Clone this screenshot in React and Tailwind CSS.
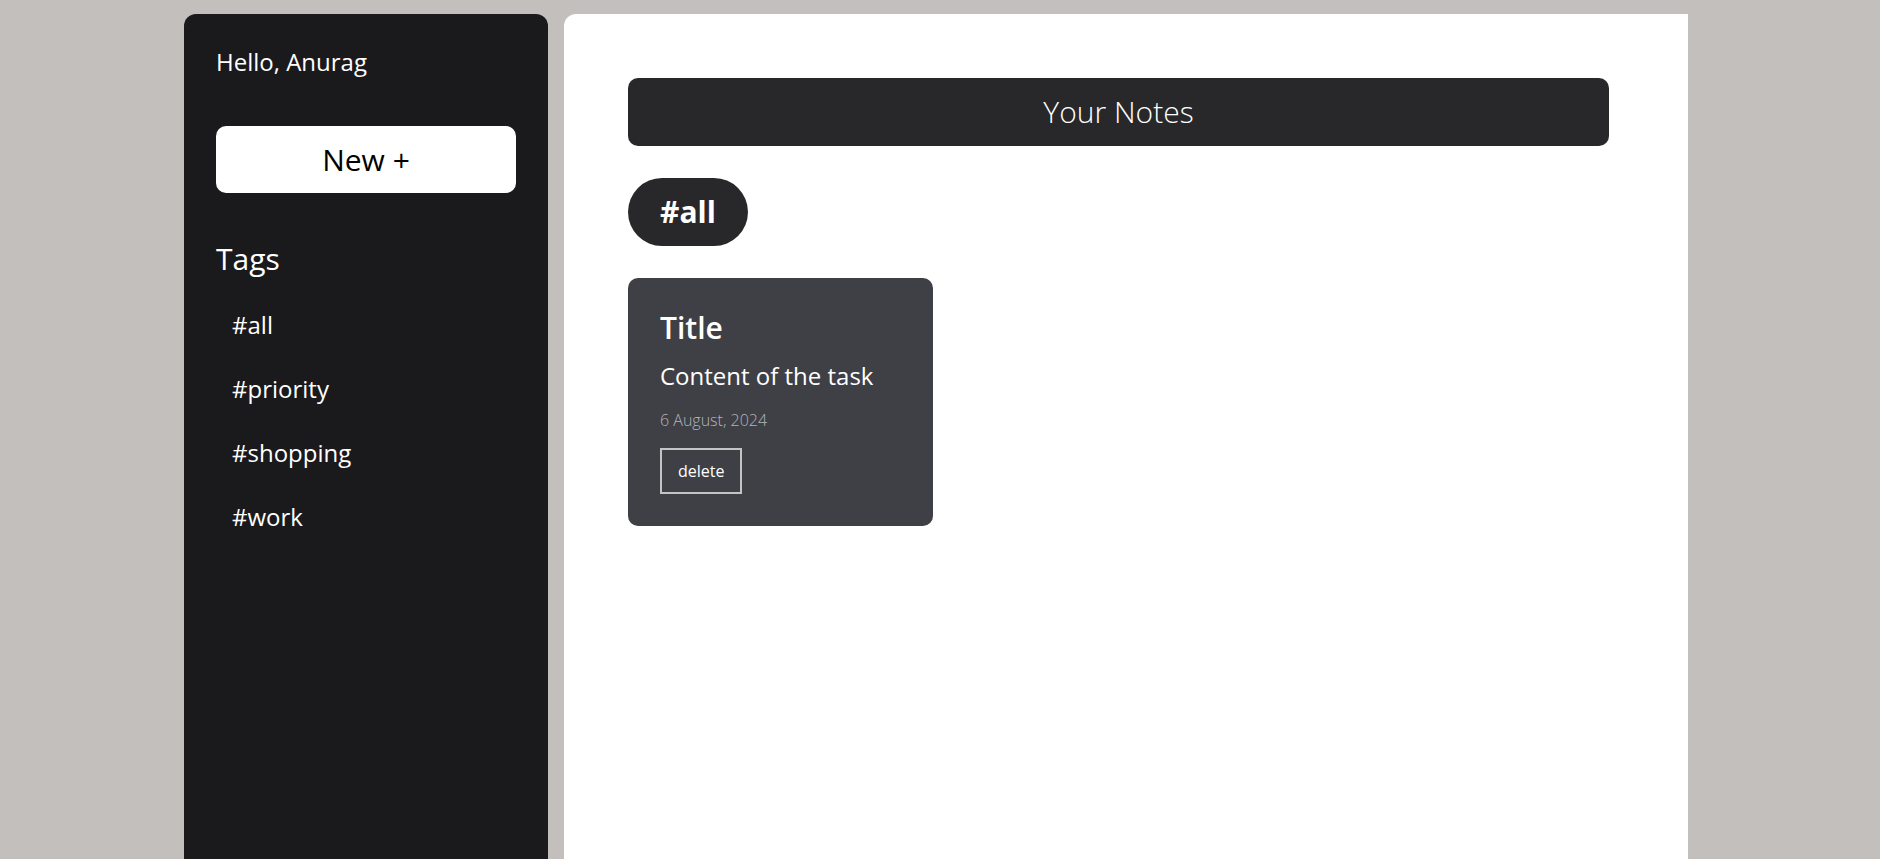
const tags = ["#all", "#priority", "#shopping", "#work"];

function Sidebar() {
  return (
    <aside className="flex w-[364px] shrink-0 flex-col rounded-t-xl bg-[#1a1a1c] px-8 pt-8 text-white">
      <p className="text-2xl">Hello, Anurag</p>
      <button className="mt-12 h-[67px] w-full rounded-[10px] bg-white text-3xl text-black">New +</button>
      <h2 className="mt-12 text-3xl">Tags</h2>
      <ul className="mt-4">
        {tags.map((tag) => (
          <li key={tag} className="px-4 py-4 text-2xl">
            {tag}
          </li>
        ))}
      </ul>
    </aside>
  );
}

function NoteCard() {
  return (
    <article className="w-[305px] rounded-[10px] bg-[#3f3f46] px-8 pt-8 pb-8 text-white">
      <h3 className="text-3xl font-semibold">Title</h3>
      <p className="mt-3.5 text-2xl">Content of the task</p>
      <p className="mt-4 text-base font-light text-[#b4b4ba]">6 August, 2024</p>
      <button className="mt-4 border-2 border-[#c4c4c4] px-4 py-[9px] text-base">delete</button>
    </article>
  );
}

export default function App() {
  return (
    <div
      className="min-h-screen bg-[#c3bfbc] pt-[14px]"
      style={{ fontFamily: '"Open Sans", "Noto Sans", sans-serif' }}
    >
      <div className="ml-[184px] flex h-[845px] w-[1504px] gap-4">
        <Sidebar />
        <main className="flex-1 rounded-tl-xl bg-white pt-16 pl-16 pr-[79px]">
          <div className="rounded-[10px] bg-[#28282a] py-4 text-center text-3xl font-light text-white">
            Your Notes
          </div>
          <div className="mt-8 flex">
            <span className="rounded-full bg-[#28282a] px-8 py-4 text-3xl font-bold text-white">#all</span>
          </div>
          <div className="mt-8 flex flex-wrap gap-8">
            <NoteCard />
          </div>
        </main>
      </div>
    </div>
  );
}
